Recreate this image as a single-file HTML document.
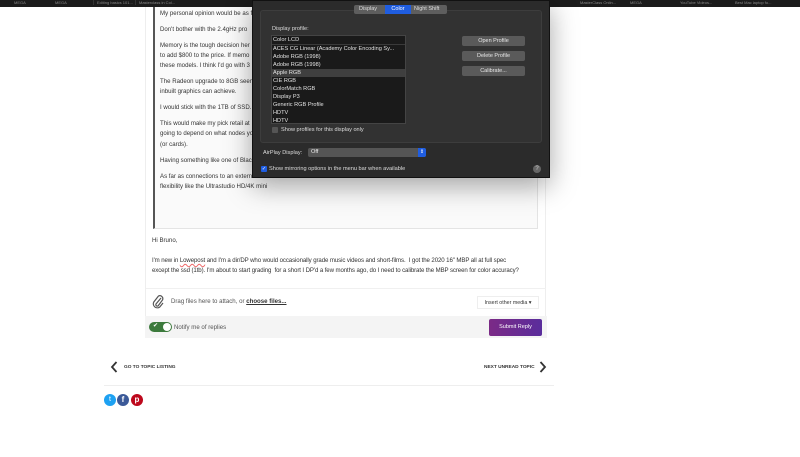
<!DOCTYPE html>
<html><head><style>
*{margin:0;padding:0;box-sizing:border-box}
body{width:800px;height:457px;overflow:hidden;background:#fff;position:relative;font-family:"Liberation Sans",sans-serif;color:#444}
.a{position:absolute;white-space:nowrap}
.t{font-size:6.1px;color:#333}
.topbar{left:0;top:0;width:800px;height:7px;background:#1b1b1b}
.topbar span{position:absolute;top:0;font-size:4px;color:#888}
.d{color:#ddd;font-size:6px}
.btn{position:absolute;left:462px;width:63px;height:10px;background:#5a5a5a;border-radius:2px;color:#e8e8e8;font-size:5.5px;text-align:center;line-height:10px}
.li{position:absolute;left:273px;font-size:5.6px;color:#e2e2e2}
</style></head><body>
<div class="a topbar">
<span style="left:14px">MEGA</span><span style="left:55px">MEGA</span><span style="left:93px;width:40px;border-left:1px solid #333;padding-left:3px">Editing basics 101...</span><span style="left:135px;border-left:1px solid #333;padding-left:3px">Masterclass in Col...</span>
<span style="left:580px">MasterClass Onlin...</span><span style="left:630px">MEGA</span><span style="left:680px">YouTube Videos...</span><span style="left:735px">Best Mac laptop fo...</span>
</div>
<div class="a" style="left:145px;top:7px;width:401px;height:330px;border-left:1px solid #eee;border-right:1px solid #eee"></div>
<div class="a" style="left:153px;top:7px;width:385px;height:222px;border-left:2px solid #555;border-right:1px solid #e4e4e4;border-bottom:1px solid #e4e4e4;background:#fafafa"></div>
<div class="a t" style="left:160px;top:10px">My personal opinion would be as f</div>
<div class="a t" style="left:160px;top:26px">Don't bother with the 2.4gHz pro</div>
<div class="a t" style="left:160px;top:42px">Memory is the tough decision her</div>
<div class="a t" style="left:160px;top:52px">to add $800 to the price. If memo</div>
<div class="a t" style="left:160px;top:62px">these models. I think I'd go with 3</div>
<div class="a t" style="left:160px;top:78px">The Radeon upgrade to 8GB seem</div>
<div class="a t" style="left:160px;top:88px">inbuilt graphics can achieve.</div>
<div class="a t" style="left:160px;top:104px">I would stick with the 1TB of SSD.</div>
<div class="a t" style="left:160px;top:120px">This would make my pick retail at</div>
<div class="a t" style="left:160px;top:130px">going to depend on what nodes yo</div>
<div class="a t" style="left:160px;top:141px">(or cards).</div>
<div class="a t" style="left:160px;top:157px">Having something like one of Blac</div>
<div class="a t" style="left:160px;top:173px">As far as connections to an extern</div>
<div class="a t" style="left:160px;top:183px">flexibility like the Ultrastudio HD/4K mini</div>

<div class="a t" style="left:152px;top:237px">Hi Bruno,</div>
<div class="a t" style="left:152px;top:257px;letter-spacing:-0.1px">I'm new in <span style="text-decoration:underline wavy #e66">Lowepost</span> and I'm a dir/DP who would occasionally grade music videos and short-films.&nbsp; I got the 2020 16" MBP all at full spec</div>
<div class="a t" style="left:152px;top:267px;letter-spacing:-0.1px">except the ssd (1tb). I'm about to start grading&nbsp; for a short I DP'd a few months ago, do I need to calibrate the MBP screen for color accuracy?</div>
<div class="a" style="left:146px;top:288px;width:400px;height:1px;background:#f0f0f0"></div>
<svg class="a" style="left:152px;top:294px" width="12" height="15" viewBox="0 0 12 15"><path d="M9 4 L4 10 a1.5 1.5 0 0 0 2 2 L10.5 6 a3 3 0 0 0 -4 -4 L1.8 8 a4 4 0 0 0 6 5 L11 9" fill="none" stroke="#555" stroke-width="1.2"/></svg>
<div class="a t" style="left:171px;top:298px;color:#555">Drag files here to attach, or <b style="text-decoration:underline;color:#333">choose files...</b></div>
<div class="a" style="left:477px;top:296px;width:62px;height:13px;border:1px solid #eee;font-size:5.3px;color:#333;text-align:center;line-height:12px">Insert other media ▾</div>
<div class="a" style="left:145px;top:316px;width:402px;height:22px;background:#f4f4f4"></div>
<div class="a" style="left:149px;top:322px;width:23px;height:10px;background:#3c7a3c;border-radius:5px"><div style="position:absolute;right:1px;top:1px;width:8px;height:8px;border-radius:50%;background:#fff"></div><span style="position:absolute;left:4px;top:0;color:#fff;font-size:6px">✔</span></div>
<div class="a t" style="left:174px;top:324px;color:#555">Notify me of replies</div>
<div class="a" style="left:489px;top:319px;width:53px;height:17px;background:linear-gradient(90deg,#7b2a86,#5a2d9c);border-radius:2px;color:#fff;font-size:5.5px;text-align:center;line-height:17px">Submit Reply</div>

<svg class="a" style="left:110px;top:361px" width="8" height="12" viewBox="0 0 8 12"><path d="M6.5 1 L2 6 L6.5 11" fill="none" stroke="#333" stroke-width="1.8"/></svg>
<div class="a" style="left:124px;top:365px;font-size:4.8px;color:#333;font-weight:bold">GO TO TOPIC LISTING</div>
<div class="a" style="left:484px;top:365px;font-size:4.8px;color:#333;font-weight:bold">NEXT UNREAD TOPIC</div>
<svg class="a" style="left:539px;top:361px" width="8" height="12" viewBox="0 0 8 12"><path d="M1.5 1 L6 6 L1.5 11" fill="none" stroke="#333" stroke-width="1.8"/></svg>
<div class="a" style="left:104px;top:385px;width:450px;height:1px;background:#eee"></div>
<div class="a" style="left:104px;top:394px;width:12px;height:12px;border-radius:50%;background:#1da1f2;color:#fff;font-size:7px;text-align:center;line-height:12px">t</div>
<div class="a" style="left:117px;top:394px;width:12px;height:12px;border-radius:50%;background:#3b5998;color:#fff;font-size:8px;font-weight:bold;text-align:center;line-height:12px">f</div>
<div class="a" style="left:131px;top:394px;width:12px;height:12px;border-radius:50%;background:#bd081c;color:#fff;font-size:8px;font-weight:bold;text-align:center;line-height:12px">p</div>

<div class="a" style="left:252px;top:0;width:298px;height:178px;background:#2b2b2b;border:1px solid #111;box-shadow:0 8px 25px rgba(0,0,0,.35)"></div>
<div class="a" style="left:260px;top:10px;width:282px;height:133px;background:#323232;border:1px solid #3d3d3d;border-radius:3px"></div>
<div class="a" style="left:354px;top:5px;width:93px;height:9px;background:#5e5e5e;border-radius:2px;font-size:5.5px;color:#ddd;line-height:9px">
<span style="position:absolute;left:5px">Display</span><span style="position:absolute;left:31px;width:26px;height:9px;background:#1f5de0;color:#fff;text-align:center">Color</span><span style="position:absolute;left:60px">Night Shift</span></div>
<div class="a d" style="left:272px;top:26px;font-size:5.6px">Display profile:</div>
<div class="a" style="left:271px;top:35px;width:135px;height:89px;background:#1a1a1a;border:1px solid #444;overflow:hidden"></div>
<div class="a" style="left:272px;top:44px;width:133px;height:1px;background:#3a3a3a"></div>
<div class="a" style="left:272px;top:69px;width:133px;height:8px;background:#3f3f3f"></div>
<div class="li" style="top:37px">Color LCD</div>
<div class="li" style="top:46px">ACES CG Linear (Academy Color Encoding Sy...</div>
<div class="li" style="top:54px">Adobe RGB (1998)</div>
<div class="li" style="top:62px">Adobe RGB (1998)</div>
<div class="li" style="top:70px">Apple RGB</div>
<div class="li" style="top:78px">CIE RGB</div>
<div class="li" style="top:86px">ColorMatch RGB</div>
<div class="li" style="top:94px">Display P3</div>
<div class="li" style="top:102px">Generic RGB Profile</div>
<div class="li" style="top:110px">HDTV</div>
<div class="li" style="top:118px;height:5px;overflow:hidden">HDTV</div>
<div class="btn" style="top:36px">Open Profile</div>
<div class="btn" style="top:51px">Delete Profile</div>
<div class="btn" style="top:66px">Calibrate...</div>
<div class="a" style="left:272px;top:127px;width:6px;height:6px;background:#555;border-radius:1px"></div>
<div class="a d" style="left:281px;top:127px;font-size:5.6px">Show profiles for this display only</div>
<div class="a d" style="left:263px;top:150px;font-size:5.6px">AirPlay Display:</div>
<div class="a" style="left:308px;top:148px;width:118px;height:9px;background:#555;border-radius:2px;font-size:5.6px;color:#eee;line-height:9px;padding-left:3px">Off<span style="position:absolute;right:0;top:0;width:8px;height:9px;background:#1f5de0;border-radius:0 2px 2px 0;font-size:5px;text-align:center;color:#fff">⇕</span></div>
<div class="a" style="left:261px;top:166px;width:6px;height:6px;background:#1f5de0;border-radius:1px;color:#fff;font-size:5px;line-height:6px;text-align:center">✓</div>
<div class="a d" style="left:269px;top:166px;font-size:5.6px">Show mirroring options in the menu bar when available</div>
<div class="a" style="left:533px;top:165px;width:8px;height:8px;border-radius:50%;background:#666;color:#ccc;font-size:6px;text-align:center;line-height:8px">?</div>
</body></html>
